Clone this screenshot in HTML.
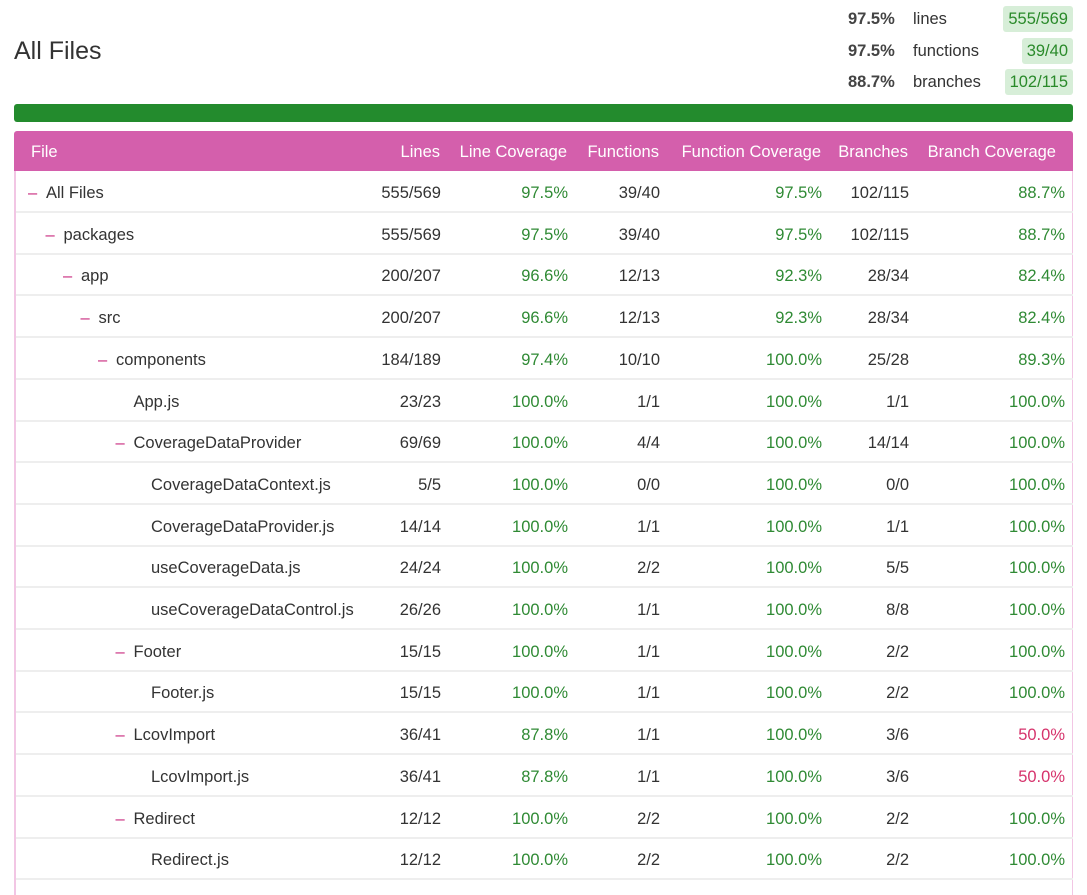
<!DOCTYPE html>
<html><head><meta charset="utf-8"><style>
*{margin:0;padding:0;box-sizing:border-box}
html,body{width:1087px;height:895px;overflow:hidden}
body{background:#fff;font-family:"Liberation Sans",sans-serif;color:#333;font-size:16.5px;position:relative}
.h1{position:absolute;left:14px;top:37px;font-size:25px;color:#333}
.sum{position:absolute;height:26px;line-height:26px;font-size:16.5px}
.sum b{position:absolute;color:#444}
.sum span.l{position:absolute;left:913px}
.badge{position:absolute;right:14px;background:#d7eed8;color:#2a8a2a;border-radius:3px;padding:0 5px;height:26px;line-height:26px}
.bar{position:absolute;left:14px;top:104px;width:1059px;height:18px;background:#238b2d;border-radius:3px}
.head{position:absolute;left:14px;top:131px;width:1059px;height:40px;background:#d45fac;color:#fff;border-radius:3px 3px 0 0}
.head div,.row div{position:absolute;top:0;line-height:43px;white-space:nowrap}
.r{text-align:right}
.tbl{position:absolute;left:14px;top:171px;width:1059px;height:724px;border-left:2px solid #f2c6e4;border-right:1px solid #f2c6e4}
.row{position:absolute;left:0;width:1057px;height:42px;border-bottom:2px solid #eeeeee}
.row div{line-height:44px}
.g{color:#2f8a34}.red{color:#d6336c}
.d{color:#c8287e}
</style></head><body>
<div class="h1">All Files</div>
<div class="sum" style="left:0;width:1087px;top:6px"><b style="left:848px">97.5%</b><span class="l">lines</span><span class="badge">555/569</span></div>
<div class="sum" style="left:0;width:1087px;top:38px"><b style="left:848px">97.5%</b><span class="l">functions</span><span class="badge">39/40</span></div>
<div class="sum" style="left:0;width:1087px;top:69px"><b style="left:848px">88.7%</b><span class="l">branches</span><span class="badge">102/115</span></div>
<div class="bar"></div>
<div class="head">
<div style="left:17px">File</div>
<div class="r" style="right:633px">Lines</div>
<div class="r" style="right:506px">Line Coverage</div>
<div class="r" style="right:414px">Functions</div>
<div class="r" style="right:252px">Function Coverage</div>
<div class="r" style="right:165px">Branches</div>
<div class="r" style="right:17px">Branch Coverage</div>
</div>
<div class="tbl" id="t"></div>
<script>
var rows=[
[0,1,"All Files","555/569","97.5%","39/40","97.5%","102/115","88.7%"],
[1,1,"packages","555/569","97.5%","39/40","97.5%","102/115","88.7%"],
[2,1,"app","200/207","96.6%","12/13","92.3%","28/34","82.4%"],
[3,1,"src","200/207","96.6%","12/13","92.3%","28/34","82.4%"],
[4,1,"components","184/189","97.4%","10/10","100.0%","25/28","89.3%"],
[5,0,"App.js","23/23","100.0%","1/1","100.0%","1/1","100.0%"],
[5,1,"CoverageDataProvider","69/69","100.0%","4/4","100.0%","14/14","100.0%"],
[6,0,"CoverageDataContext.js","5/5","100.0%","0/0","100.0%","0/0","100.0%"],
[6,0,"CoverageDataProvider.js","14/14","100.0%","1/1","100.0%","1/1","100.0%"],
[6,0,"useCoverageData.js","24/24","100.0%","2/2","100.0%","5/5","100.0%"],
[6,0,"useCoverageDataControl.js","26/26","100.0%","1/1","100.0%","8/8","100.0%"],
[5,1,"Footer","15/15","100.0%","1/1","100.0%","2/2","100.0%"],
[6,0,"Footer.js","15/15","100.0%","1/1","100.0%","2/2","100.0%"],
[5,1,"LcovImport","36/41","87.8%","1/1","100.0%","3/6","50.0%"],
[6,0,"LcovImport.js","36/41","87.8%","1/1","100.0%","3/6","50.0%"],
[5,1,"Redirect","12/12","100.0%","2/2","100.0%","2/2","100.0%"],
[6,0,"Redirect.js","12/12","100.0%","2/2","100.0%","2/2","100.0%"],
[0,0,"","","","","","",""]];
var h="";
rows.forEach(function(r,i){
var top=Math.round(i*41.7);
function c(v){return parseFloat(v)<60?"red":"g";}
h+='<div class="row" style="top:'+top+'px">';
if(r[1])h+='<div class="d" style="left:'+(12+17.5*r[0])+'px">–</div>';
h+='<div style="left:'+(30+17.5*r[0])+'px">'+r[2]+'</div>';
if(r[3]){
h+='<div class="r" style="right:632px">'+r[3]+'</div>';
h+='<div class="r '+c(r[4])+'" style="right:505px">'+r[4]+'</div>';
h+='<div class="r" style="right:413px">'+r[5]+'</div>';
h+='<div class="r '+c(r[6])+'" style="right:251px">'+r[6]+'</div>';
h+='<div class="r" style="right:164px">'+r[7]+'</div>';
h+='<div class="r '+c(r[8])+'" style="right:8px">'+r[8]+'</div>';}
h+='</div>';});
document.getElementById("t").innerHTML=h;
</script>
</body></html>
